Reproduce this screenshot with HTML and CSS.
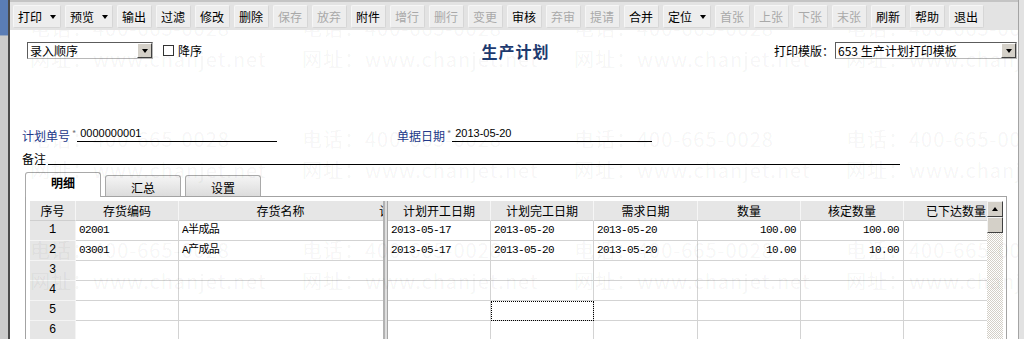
FILE: index.html
```html
<!DOCTYPE html>
<html lang="zh-CN">
<head>
  <meta charset="UTF-8" />
  <title>生产计划</title>
  <link rel="stylesheet" href="styles.css">
</head>
<body>
<div class="screen">
  <div class="edge-left"><div class="edge-blue"></div></div>

  <div class="win">
    <div class="toolbar">
      <span class="tb drop">打印<i class="arr"></i></span>
      <span class="tb drop">预览<i class="arr"></i></span>
      <span class="tb">输出</span>
      <span class="tb">过滤</span>
      <span class="tb">修改</span>
      <span class="tb">删除</span>
      <span class="tb off">保存</span>
      <span class="tb off">放弃</span>
      <span class="tb">附件</span>
      <span class="tb off">增行</span>
      <span class="tb off">删行</span>
      <span class="tb off">变更</span>
      <span class="tb">审核</span>
      <span class="tb off">弃审</span>
      <span class="tb off">提请</span>
      <span class="tb">合并</span>
      <span class="tb drop">定位<i class="arr"></i></span>
      <span class="tb off">首张</span>
      <span class="tb off">上张</span>
      <span class="tb off">下张</span>
      <span class="tb off">末张</span>
      <span class="tb">刷新</span>
      <span class="tb">帮助</span>
      <span class="tb">退出</span>
    </div>

    <div class="content">
      <div class="head">
        <div class="head-left">
          <div class="combo combo-sort"><span>录入顺序</span><b class="dd"></b></div>
          <label class="chk"><span class="box"></span>降序</label>
        </div>
        <h1 class="title">生产计划</h1>
        <div class="head-right">
          打印模版：
          <div class="combo combo-tpl"><span>653 生产计划打印模板</span><b class="dd"></b></div>
        </div>
      </div>

      <div class="fields">
        <div class="frow">
          <div class="fld fld-first">
            <span class="lbl key">计划单号</span><span class="req">*</span>
            <span class="val">0000000001</span>
          </div>
          <div class="fld">
            <span class="lbl key">单据日期</span><span class="req">*</span>
            <span class="val">2013-05-20</span>
          </div>
        </div>
        <div class="frow">
          <div class="fld">
            <span class="lbl">备注</span>
            <span class="val val-note"></span>
          </div>
        </div>
      </div>

      <div class="tabs">
        <span class="tab on">明细</span>
        <span class="tab">汇总</span>
        <span class="tab">设置</span>
      </div>

      <div class="panel">
        <div class="grid-wrap">
          <div class="grid">
            <div class="row hdr">
              <span class="c rn">序号</span>
              <span class="c code">存货编码</span>
              <span class="c name"><em>存货名称</em><i class="cut">计</i></span>
              <span class="split"></span>
              <span class="c d1">计划开工日期</span>
              <span class="c d2">计划完工日期</span>
              <span class="c d3">需求日期</span>
              <span class="c q1">数量</span>
              <span class="c q2">核定数量</span>
              <span class="c q3">已下达数量</span>
            </div>
            <div class="row">
              <span class="c rn">1</span>
              <span class="c code">02001</span>
              <span class="c name">A半成品</span>
              <span class="split"></span>
              <span class="c d1">2013-05-17</span>
              <span class="c d2">2013-05-20</span>
              <span class="c d3">2013-05-20</span>
              <span class="c q1 num">100.00</span>
              <span class="c q2 num">100.00</span>
              <span class="c q3 num"></span>
            </div>
            <div class="row">
              <span class="c rn">2</span>
              <span class="c code">03001</span>
              <span class="c name">A产成品</span>
              <span class="split"></span>
              <span class="c d1">2013-05-17</span>
              <span class="c d2">2013-05-20</span>
              <span class="c d3">2013-05-20</span>
              <span class="c q1 num">10.00</span>
              <span class="c q2 num">10.00</span>
              <span class="c q3 num"></span>
            </div>
            <div class="row">
              <span class="c rn">3</span><span class="c code"></span><span class="c name"></span><span class="split"></span>
              <span class="c d1"></span><span class="c d2"></span><span class="c d3"></span>
              <span class="c q1"></span><span class="c q2"></span><span class="c q3"></span>
            </div>
            <div class="row">
              <span class="c rn">4</span><span class="c code"></span><span class="c name"></span><span class="split"></span>
              <span class="c d1"></span><span class="c d2"></span><span class="c d3"></span>
              <span class="c q1"></span><span class="c q2"></span><span class="c q3"></span>
            </div>
            <div class="row">
              <span class="c rn">5</span><span class="c code"></span><span class="c name"></span><span class="split"></span>
              <span class="c d1"></span><span class="c d2 focus"></span><span class="c d3"></span>
              <span class="c q1"></span><span class="c q2"></span><span class="c q3"></span>
            </div>
            <div class="row">
              <span class="c rn">6</span><span class="c code"></span><span class="c name"></span><span class="split"></span>
              <span class="c d1"></span><span class="c d2"></span><span class="c d3"></span>
              <span class="c q1"></span><span class="c q2"></span><span class="c q3"></span>
            </div>
          </div>
          <div class="vscroll">
            <span class="sb-btn"><i class="up"></i></span>
            <span class="sb-thumb"></span>
            <span class="sb-track"></span>
          </div>
        </div>
      </div>

      <!-- watermark of the trial edition -->
      <div class="wm">
        <div class="wm-grid">
          <div class="wm-cell"><p>电话：400-665-0028</p><p>网址：www.chanjet.net</p></div>
          <div class="wm-cell"><p>电话：400-665-0028</p><p>网址：www.chanjet.net</p></div>
          <div class="wm-cell"><p>电话：400-665-0028</p><p>网址：www.chanjet.net</p></div>
          <div class="wm-cell"><p>电话：400-665-0028</p><p>网址：www.chanjet.net</p></div>
          <div class="wm-cell"><p>电话：400-665-0028</p><p>网址：www.chanjet.net</p></div>
          <div class="wm-cell"><p>电话：400-665-0028</p><p>网址：www.chanjet.net</p></div>
          <div class="wm-cell"><p>电话：400-665-0028</p><p>网址：www.chanjet.net</p></div>
          <div class="wm-cell"><p>电话：400-665-0028</p><p>网址：www.chanjet.net</p></div>
          <div class="wm-cell"><p>电话：400-665-0028</p><p>网址：www.chanjet.net</p></div>
          <div class="wm-cell"><p>电话：400-665-0028</p><p>网址：www.chanjet.net</p></div>
          <div class="wm-cell"><p>电话：400-665-0028</p><p>网址：www.chanjet.net</p></div>
          <div class="wm-cell"><p>电话：400-665-0028</p><p>网址：www.chanjet.net</p></div>
        </div>
      </div>
    </div>
  </div>

  <div class="edge-right"></div>
</div>
</body>
</html>
```

FILE: styles.css
```css
* {
  box-sizing: border-box;
}
body {
  margin: 0;
  width: 1024px;
  height: 339px;
  overflow: hidden;
  background: #d4d0c8;
  font-family: "Noto Sans CJK SC", "Liberation Sans", sans-serif;
  font-size: 12px;
  color: #000;
}
.screen {
  display: flex;
  height: 339px;
}
.edge-left {
  width: 8px;
  background: #cbcbcb;
}
.edge-blue {
  height: 36px;
  background: #5a7db6;
  border-bottom: 1px solid #98a8c0;
}
.win {
  width: 1011px;
  display: flex;
  flex-direction: column;
  border-left: 2px solid #4a4a4a;
  border-right: 1px solid #a4a4a4;
  background: #fff;
}
.edge-right {
  flex: 1;
  background: #e2e2e2;
}

/* toolbar */
.toolbar {
  flex: none;
  height: 30px;
  display: flex;
  align-items: center;
  gap: 4px;
  padding-left: 3px;
  background: #e3e3e3;
  border-top: 2px solid #c4c4c4;
}
.tb {
  display: flex;
  align-items: center;
  width: 35px;
  height: 23px;
  padding: 2px 0 0 4px;
  border: 1px solid;
  border-color: #f6f6f6 #d6d6d6 #d6d6d6 #f6f6f6;
  border-radius: 2px;
  background: #ededed;
  line-height: 14px;
}
.tb.drop {
  width: 48px;
}
.tb.off {
  color: #a9a9a9;
}
.arr {
  margin: 0 4px 0 auto;
  border-left: 3.5px solid transparent;
  border-right: 3.5px solid transparent;
  border-top: 4px solid #000;
}

/* content */
.content {
  flex: 1;
  position: relative;
  overflow: hidden;
  background: #fff;
}
.head {
  display: grid;
  grid-template-columns: 1fr auto 1fr;
  align-items: center;
  height: 17px;
  margin-top: 11px;
  padding: 0 1px 0 17px;
}
.head-left,
.head-right {
  display: flex;
  align-items: center;
}
.head-right {
  justify-content: flex-end;
}
.title {
  margin: 2px 13px 0 0;
  font-size: 16px;
  font-weight: bold;
  color: #1d3a6f;
  letter-spacing: 1px;
  line-height: 17px;
}
.combo {
  display: flex;
  height: 17px;
  border: 1px solid;
  border-color: #5c5c5c #b8b8b8 #b8b8b8 #5c5c5c;
  background: #fff;
}
.combo span {
  flex: 1;
  padding-left: 2px;
  line-height: 15px;
  white-space: nowrap;
}
.combo-sort {
  width: 126px;
}
.combo-tpl {
  width: 182px;
  margin-left: 1px;
}
.dd {
  width: 15px;
  display: flex;
  align-items: center;
  justify-content: center;
  background: #d4d0c8;
  border: 1px solid;
  border-color: #fff #404040 #404040 #fff;
}
.dd::after {
  content: "";
  border-left: 3.5px solid transparent;
  border-right: 3.5px solid transparent;
  border-top: 4px solid #000;
}
.chk {
  display: flex;
  align-items: center;
  margin-left: 10px;
}
.chk .box {
  width: 11px;
  height: 11px;
  margin-right: 4px;
  border: 1px solid #333;
  background: #fff;
}

/* header fields */
.fields {
  margin-top: 68px;
  padding-left: 12px;
}
.frow {
  display: flex;
  height: 16px;
}
.frow + .frow {
  margin-top: 7px;
}
.fld {
  display: flex;
  align-items: flex-end;
}
.fld-first {
  width: 375px;
}
.lbl {
  line-height: 14px;
  margin-bottom: -1px;
}
.lbl.key {
  color: #22388a;
}
.req {
  align-self: flex-start;
  margin: 3px 1px 0 2px;
  font-size: 9px;
  line-height: 9px;
  color: #777;
}
.val {
  width: 200px;
  height: 16px;
  padding-left: 3px;
  border-bottom: 1px solid #000;
  font-family: "Liberation Sans", sans-serif;
  font-size: 11px;
  line-height: 14px;
}
.val-note {
  width: 852px;
  margin-left: 2px;
}

/* tabs */
.tabs {
  position: relative;
  z-index: 1;
  display: flex;
  align-items: flex-end;
  gap: 4px;
  height: 24px;
  margin: 7px 0 0 15px;
}
.tab {
  width: 76px;
  height: 21px;
  border: 1px solid #a9a9a9;
  border-bottom: none;
  border-radius: 3px 3px 0 0;
  background: linear-gradient(#f5f5f5, #dcdcdc);
  text-align: center;
  line-height: 24px;
}
.tab.on {
  height: 25px;
  margin-bottom: -1px;
  background: #fff;
  font-weight: bold;
  line-height: 20px;
}

/* grid */
.panel {
  width: 982px;
  height: 200px;
  margin-left: 15px;
  padding: 4px 3px 0 4px;
  border: 1px solid #a3a3a3;
}
.grid-wrap {
  display: flex;
}
.grid {
  width: 957px;
}
.row {
  display: flex;
  height: 20px;
}
.c {
  height: 20px;
  padding: 0 3px;
  border-right: 1px solid #d3d3d3;
  border-bottom: 1px solid #d3d3d3;
  font-family: "Liberation Mono", "Noto Sans CJK SC", monospace;
  font-size: 11px;
  letter-spacing: -0.6px;
  line-height: 19px;
  white-space: nowrap;
  overflow: hidden;
}
.rn {
  width: 46px;
  text-align: center;
  background: #e6e6e6;
  border-color: #f4f4f4;
  font-size: 12px;
  letter-spacing: 0;
}
.code { width: 103px; }
.name { width: 204px; border-right: none; }
.d1 { width: 103px; }
.d2 { width: 103px; }
.d3 { width: 104px; }
.q1 { width: 103px; }
.q2 { width: 103px; }
.q3 { width: 83px; border-right: none; }
.num {
  text-align: right;
  padding-right: 4px;
}
.split {
  width: 5px;
  height: 20px;
  background: linear-gradient(to right, #b2b2b2 0 2px, #dedede 2px 4px, #a6a6a6 4px);
}
.hdr .c {
  background: #e6e6e6;
  border-right-color: #f6f6f6;
  border-bottom-color: #cfcfcf;
  font-family: "Noto Sans CJK SC", sans-serif;
  font-size: 12px;
  letter-spacing: 0;
  text-align: center;
}
.hdr .name {
  display: flex;
  padding-right: 0;
}
.hdr .name em {
  flex: 1;
  font-style: normal;
}
.hdr .name .cut {
  width: 4px;
  overflow: hidden;
  font-style: normal;
}
.hdr .q3 {
  text-align: right;
  padding-right: 1px;
}
.focus {
  outline: 1px dotted #000;
  outline-offset: -1px;
}

/* scrollbar */
.vscroll {
  width: 16px;
  height: 150px;
  display: flex;
  flex-direction: column;
}
.sb-btn,
.sb-thumb {
  height: 16px;
  background: #d4d0c8;
  border: 1px solid;
  border-color: #f4f4f4 #404040 #404040 #f4f4f4;
}
.sb-btn {
  display: flex;
  align-items: center;
  justify-content: center;
}
.up {
  border-left: 3.5px solid transparent;
  border-right: 3.5px solid transparent;
  border-bottom: 4px solid #000;
}
.sb-track {
  flex: 1;
  background: repeating-conic-gradient(#fff 0 25%, #d4d0c8 0 50%) 0 0 / 2px 2px;
}

/* watermark */
.wm {
  position: absolute;
  inset: 0;
  z-index: 5;
  overflow: hidden;
  pointer-events: none;
  color: rgba(0, 0, 0, 0.05);
  font-size: 20px;
  letter-spacing: 1px;
}
.wm-grid {
  display: grid;
  grid-template-columns: repeat(4, 272px);
  grid-auto-rows: 111px;
  margin: -12px 0 0 20px;
}
.wm-cell p {
  margin: 0 0 11px;
  line-height: 20px;
  white-space: nowrap;
}
```
